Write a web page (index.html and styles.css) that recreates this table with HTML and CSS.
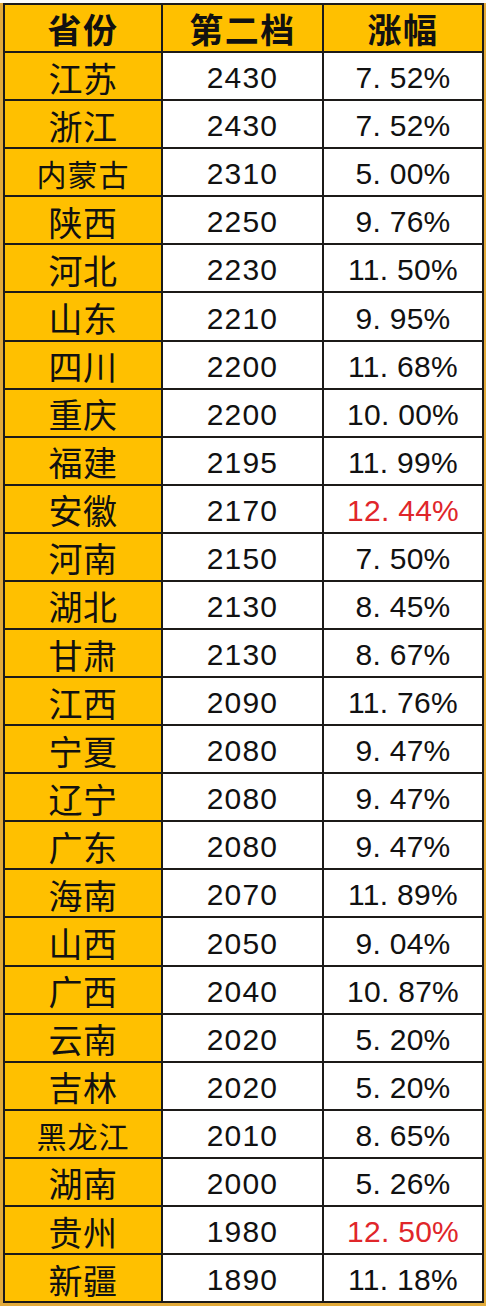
FILE: index.html
```html
<!DOCTYPE html>
<html lang="zh">
<head>
<meta charset="utf-8">
<link rel="stylesheet" href="styles.css">
</head>
<body>
<div class="page">
  <div class="sheet">
    <div class="grid">
      <div class="c h name">省份</div><div class="c h">第二档</div><div class="c h">涨幅</div>
      <div class="c name">江苏</div><div class="c num">2430</div><div class="c pct">7. 52%</div>
      <div class="c name">浙江</div><div class="c num">2430</div><div class="c pct">7. 52%</div>
      <div class="c name three">内蒙古</div><div class="c num">2310</div><div class="c pct">5. 00%</div>
      <div class="c name">陕西</div><div class="c num">2250</div><div class="c pct">9. 76%</div>
      <div class="c name">河北</div><div class="c num">2230</div><div class="c pct">11. 50%</div>
      <div class="c name">山东</div><div class="c num">2210</div><div class="c pct">9. 95%</div>
      <div class="c name">四川</div><div class="c num">2200</div><div class="c pct">11. 68%</div>
      <div class="c name">重庆</div><div class="c num">2200</div><div class="c pct">10. 00%</div>
      <div class="c name">福建</div><div class="c num">2195</div><div class="c pct">11. 99%</div>
      <div class="c name">安徽</div><div class="c num">2170</div><div class="c pct red">12. 44%</div>
      <div class="c name">河南</div><div class="c num">2150</div><div class="c pct">7. 50%</div>
      <div class="c name">湖北</div><div class="c num">2130</div><div class="c pct">8. 45%</div>
      <div class="c name">甘肃</div><div class="c num">2130</div><div class="c pct">8. 67%</div>
      <div class="c name">江西</div><div class="c num">2090</div><div class="c pct">11. 76%</div>
      <div class="c name">宁夏</div><div class="c num">2080</div><div class="c pct">9. 47%</div>
      <div class="c name">辽宁</div><div class="c num">2080</div><div class="c pct">9. 47%</div>
      <div class="c name">广东</div><div class="c num">2080</div><div class="c pct">9. 47%</div>
      <div class="c name">海南</div><div class="c num">2070</div><div class="c pct">11. 89%</div>
      <div class="c name">山西</div><div class="c num">2050</div><div class="c pct">9. 04%</div>
      <div class="c name">广西</div><div class="c num">2040</div><div class="c pct">10. 87%</div>
      <div class="c name">云南</div><div class="c num">2020</div><div class="c pct">5. 20%</div>
      <div class="c name">吉林</div><div class="c num">2020</div><div class="c pct">5. 20%</div>
      <div class="c name three">黑龙江</div><div class="c num">2010</div><div class="c pct">8. 65%</div>
      <div class="c name">湖南</div><div class="c num">2000</div><div class="c pct">5. 26%</div>
      <div class="c name">贵州</div><div class="c num">1980</div><div class="c pct red">12. 50%</div>
      <div class="c name">新疆</div><div class="c num">1890</div><div class="c pct">11. 18%</div>
    </div>
  </div>
</div>
</body>
</html>
```
FILE: styles.css
```css
html, body {
  margin: 0;
  padding: 0;
  background: #ffffff;
}
.page {
  width: 486px;
  height: 1306px;
  overflow: hidden;
  padding-top: 3px;
  box-sizing: border-box;
  background: #fbfbf8;
}
.sheet {
  display: flex;
  padding-left: 3px;
  background: #e2aa3a;
  width: 486px;
  box-sizing: border-box;
  height: 1303px;
}
.grid {
  display: grid;
  grid-template-columns: 156px 159px 158px;
  grid-auto-rows: 46.08px;
  gap: 2px;
  padding: 2px;
  background: #1c1a18;
  align-self: flex-start;
}
.c {
  display: flex;
  align-items: center;
  justify-content: center;
  background: #ffffff;
  color: #111;
  padding-top: 4px;
  box-sizing: border-box;
  white-space: nowrap;
}
.name {
  background: #ffc000;
  font-family: "Noto Sans CJK SC", sans-serif;
  font-size: 34px;
  letter-spacing: 0.5px;
  padding-top: 2px;
}
.three {
  font-size: 30px;
  letter-spacing: 1px;
}
.h {
  background: #ffc000;
  font-family: "Noto Sans CJK SC", sans-serif;
  font-weight: 700;
  font-size: 34px;
  letter-spacing: 1.5px;
  padding-top: 0;
}
.num, .pct {
  font-family: "Liberation Sans", Arial, sans-serif;
  font-size: 30px;
  letter-spacing: 1.2px;
}
.pct {
  letter-spacing: 0.3px;
}
.red {
  color: #e0262a;
}
```
